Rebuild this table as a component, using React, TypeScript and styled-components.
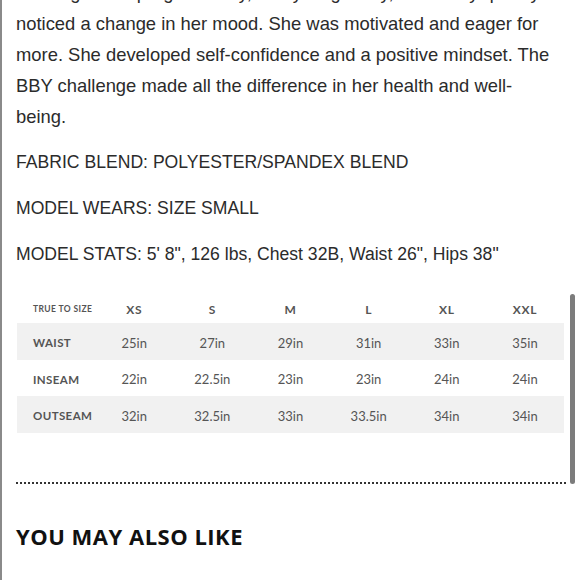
import React from "react";
import styled, { createGlobalStyle } from "styled-components";

const GlobalStyle = createGlobalStyle`
  html, body {
    margin: 0;
    padding: 0;
    background: #fff;
    overflow: hidden;
  }
`;

const Page = styled.div`
  position: relative;
  height: 580px;
  overflow: hidden;
  border-left: 2px solid #8a8a8a;
  box-sizing: border-box;
  padding: 0 14px 0 14px;
`;

const Story = styled.p`
  margin: -23px 0 0 0;
  font-family: "Liberation Sans", Arial, sans-serif;
  font-size: 18.4px;
  line-height: 31px;
  color: #2b2b2b;
`;

const Spec = styled.p`
  margin: 0;
  padding-top: 15px;
  font-family: "Liberation Sans", Arial, sans-serif;
  font-size: 17.6px;
  line-height: 31px;
  color: #2b2b2b;
`;

const SpecList = styled.div`
  display: flex;
  flex-direction: column;
`;

const SizeTable = styled.div`
  margin: 25px 1px 0 1px;
  width: 547px;
  display: flex;
  flex-direction: column;
`;

const Row = styled.div<{ $shaded?: boolean; $head?: boolean }>`
  display: grid;
  grid-template-columns: repeat(7, 1fr);
  align-items: center;
  height: ${(p) => (p.$head ? "28px" : "36.5px")};
  padding-top: ${(p) => (p.$head ? "0" : "3px")};
  box-sizing: border-box;
  background: ${(p) => (p.$shaded ? "#f1f1f1" : "transparent")};
`;

const Label = styled.div<{ $small?: boolean }>`
  padding-left: 16px;
  font-family: Lato, "Liberation Sans", sans-serif;
  font-weight: 700;
  font-size: ${(p) => (p.$small ? "8.5px" : "11.5px")};
  letter-spacing: 0.4px;
  color: #555;
`;

const HeadCell = styled.div`
  text-align: center;
  font-family: Lato, "Liberation Sans", sans-serif;
  font-weight: 700;
  font-size: 12px;
  letter-spacing: 0.6px;
  color: #555;
`;

const Cell = styled.div`
  text-align: center;
  font-family: Lato, "Liberation Sans", sans-serif;
  font-size: 13px;
  color: #555;
`;

const Divider = styled.div`
  margin: 49px 0 0 0;
  width: 550px;
  border-top: 2px dotted #333;
`;

const Heading = styled.h2`
  margin: 37px 0 0 0;
  font-family: "Open Sans", "Liberation Sans", sans-serif;
  font-weight: 700;
  font-size: 22px;
  letter-spacing: 0.5px;
  color: #111;
`;

const Scrollbar = styled.div`
  position: absolute;
  top: 294px;
  left: 568px;
  width: 5px;
  height: 190px;
  border-radius: 3px;
  background: #7c7c7c;
`;

const sizes = ["XS", "S", "M", "L", "XL", "XXL"];

const rows = [
  { name: "WAIST", values: ["25in", "27in", "29in", "31in", "33in", "35in"] },
  { name: "INSEAM", values: ["22in", "22.5in", "23in", "23in", "24in", "24in"] },
  { name: "OUTSEAM", values: ["32in", "32.5in", "33in", "33.5in", "34in", "34in"] },
];

const App = () => {
  return (
    <Page>
      <GlobalStyle />
      <Story>
        Sticking to the program daily, every single day, her family quickly
        <br />
        noticed a change in her mood. She was motivated and eager for
        <br />
        more. She developed self-confidence and a positive mindset. The
        <br />
        BBY challenge made all the difference in her health and well-
        <br />
        being.
      </Story>
      <SpecList>
        <Spec>FABRIC BLEND: POLYESTER/SPANDEX BLEND</Spec>
        <Spec>MODEL WEARS: SIZE SMALL</Spec>
        <Spec>MODEL STATS: 5' 8", 126 lbs, Chest 32B, Waist 26", Hips 38"</Spec>
      </SpecList>
      <SizeTable>
        <Row $head>
          <Label $small>TRUE TO SIZE</Label>
          {sizes.map((s) => (
            <HeadCell key={s}>{s}</HeadCell>
          ))}
        </Row>
        {rows.map((r, i) => (
          <Row key={r.name} $shaded={i % 2 === 0}>
            <Label>{r.name}</Label>
            {r.values.map((v, j) => (
              <Cell key={j}>{v}</Cell>
            ))}
          </Row>
        ))}
      </SizeTable>
      <Divider />
      <Heading>YOU MAY ALSO LIKE</Heading>
      <Scrollbar />
    </Page>
  );
};

export default App;
